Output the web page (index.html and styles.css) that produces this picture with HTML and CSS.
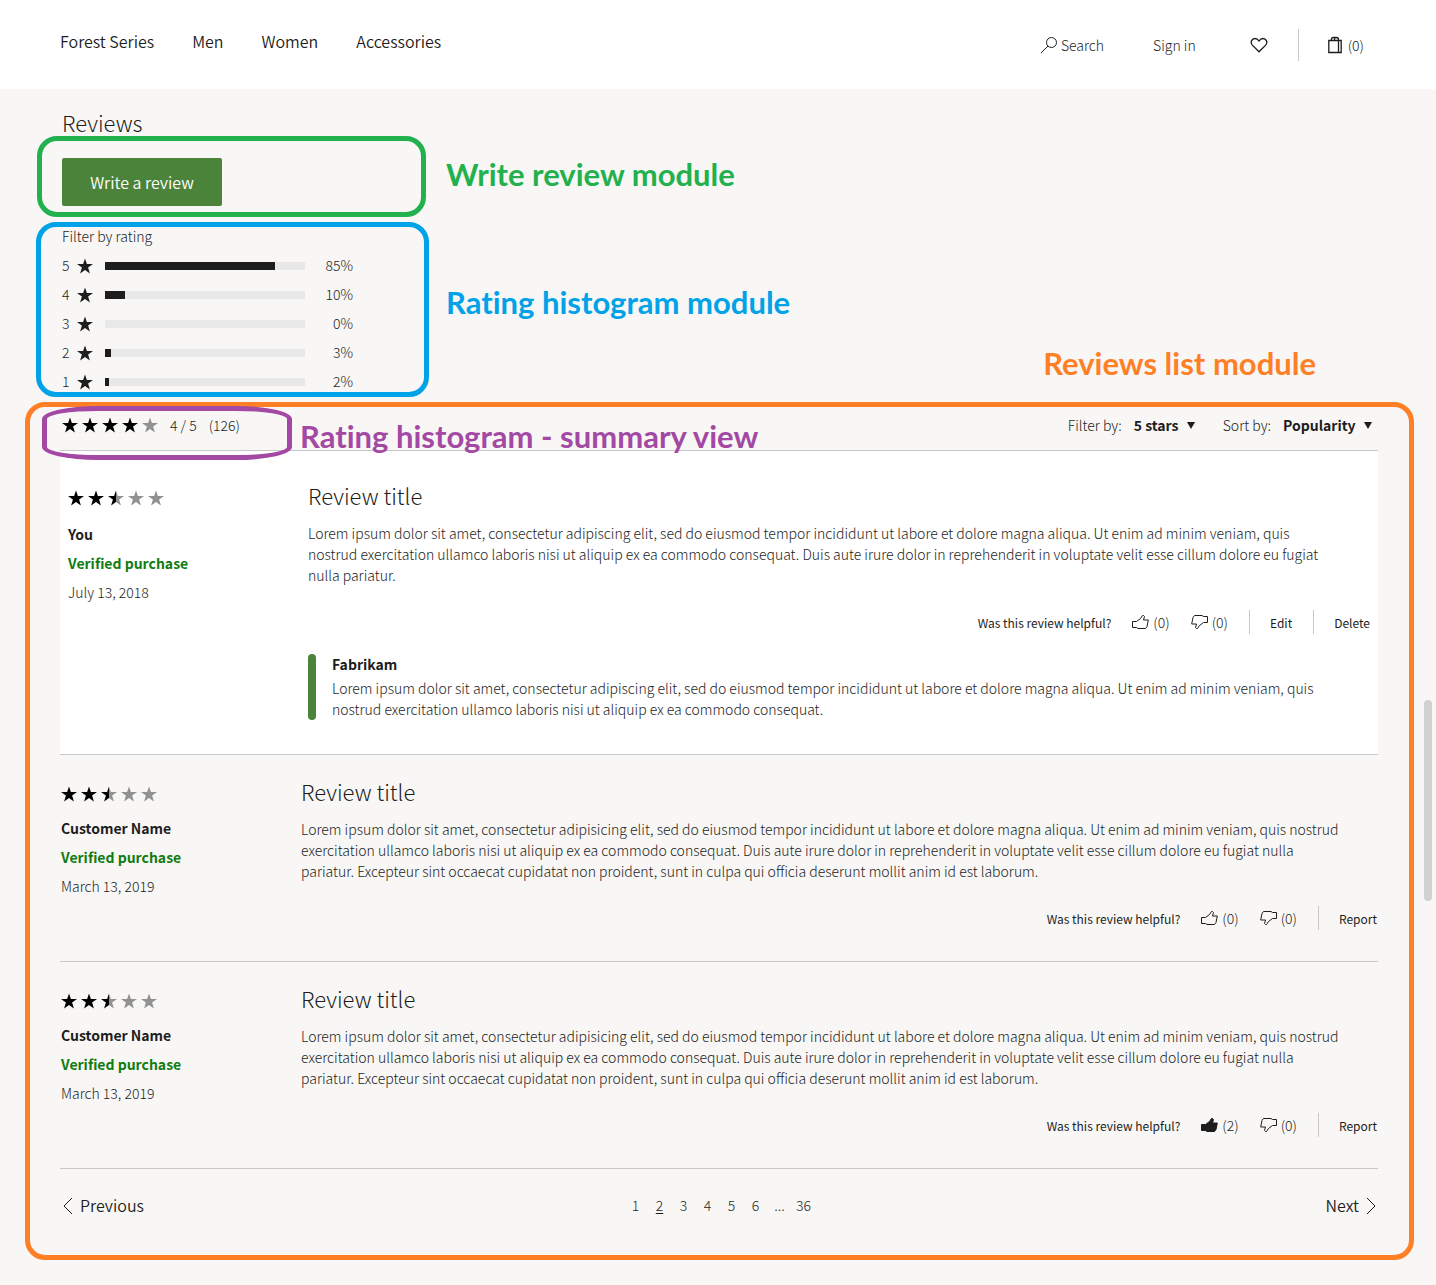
FILE: index.html
```html
<!DOCTYPE html>
<html lang="en">
<head>
<meta charset="utf-8">
<meta name="viewport" content="width=device-width, initial-scale=1">
<title>Reviews</title>
<link rel="stylesheet" href="styles.css">
</head>
<body>
<svg class="sprite" aria-hidden="true">
  <defs>
    <symbol id="star" viewBox="0 0 16 16"><path d="M8 0.5 9.9 6H16L11.1 9.6 12.9 15.5 8 12 3.1 15.5 4.9 9.6 0 6H6.1Z"/></symbol>
    <symbol id="half" viewBox="0 0 16 16"><path d="M8 0.5 9.9 6H16L11.1 9.6 12.9 15.5 8 12Z" fill="#919191"/><path d="M8 0.5V12L3.1 15.5 4.9 9.6 0 6H6.1Z"/></symbol>
    <symbol id="thumb" viewBox="0 0 17 16"><path d="M.5 7.5H4.500L8.500 4.500 10.500 1.500H11.500L12.500 2.500 11.500 6H16.300L15 12.500 13.500 14.500H6L4.500 13.500H.5Z"/></symbol>
  </defs>
</svg>

<header class="header">
  <nav class="nav">
    <a href="#">Forest Series</a>
    <a href="#">Men</a>
    <a href="#">Women</a>
    <a href="#">Accessories</a>
  </nav>
  <div class="tools">
    <button class="tool" type="button">
      <svg class="icon" width="18" height="18" viewBox="0 0 18 18"><circle cx="11.5" cy="6.5" r="5"/><path d="M8 10 1 17"/></svg>
      Search
    </button>
    <a class="tool tool-signin" href="#">Sign in</a>
    <a class="tool tool-heart" href="#" aria-label="Wishlist">
      <svg class="icon bold" width="18" height="16" viewBox="0 0 18 16"><path d="M9 14.800 2.300 8.100C-.2 5 2 1.500 5 1.500 7 1.500 8 2.500 9 4 10 2.500 11 1.500 13 1.500 16 1.500 18.200 5 15.700 8.100Z"/></svg>
    </a>
    <a class="tool tool-bag" href="#" aria-label="Bag, 0 items">
      <svg class="icon bold" width="14" height="18" viewBox="0 0 14 18"><path d="M.8 4.500H13.200V16.500H.8ZM10.500 4.500V16.500M3.500 4.500V3Q3.500 1.500 5 1.500H8.500Q10.500 1.500 10.500 4M6.500 4.500V3Q6.500 1.500 8 1.500"/></svg>
      (0)
    </a>
  </div>
</header>

<main class="main">
  <h1 class="heading">Reviews</h1>

  <section class="module write">
    <button class="write-button" type="button">Write a review</button>
    <div class="outline outline-write"></div>
    <p class="label label-write">Write review module</p>
  </section>

  <section class="module histogram">
    <h2 class="histogram-title">Filter by rating</h2>
    <button class="bar-row" type="button"><span class="bar-num">5</span><svg class="star-dark" width="16" height="16"><use href="#star"/></svg><span class="bar"><span class="bar-fill" style="width:85%"></span></span><span class="bar-pct">85%</span></button>
    <button class="bar-row" type="button"><span class="bar-num">4</span><svg class="star-dark" width="16" height="16"><use href="#star"/></svg><span class="bar"><span class="bar-fill" style="width:10%"></span></span><span class="bar-pct">10%</span></button>
    <button class="bar-row" type="button"><span class="bar-num">3</span><svg class="star-dark" width="16" height="16"><use href="#star"/></svg><span class="bar"><span class="bar-fill" style="width:0%"></span></span><span class="bar-pct">0%</span></button>
    <button class="bar-row" type="button"><span class="bar-num">2</span><svg class="star-dark" width="16" height="16"><use href="#star"/></svg><span class="bar"><span class="bar-fill" style="width:3%"></span></span><span class="bar-pct">3%</span></button>
    <button class="bar-row" type="button"><span class="bar-num">1</span><svg class="star-dark" width="16" height="16"><use href="#star"/></svg><span class="bar"><span class="bar-fill" style="width:2%"></span></span><span class="bar-pct">2%</span></button>
    <div class="outline outline-histogram"></div>
    <p class="label label-histogram">Rating histogram module</p>
  </section>

  <section class="module list">
    <div class="toolbar">
      <div class="summary">
        <span class="stars" role="img" aria-label="4 of 5 stars">
          <svg width="16" height="16"><use href="#star"/></svg><svg width="16" height="16"><use href="#star"/></svg><svg width="16" height="16"><use href="#star"/></svg><svg width="16" height="16"><use href="#star"/></svg><svg class="off" width="16" height="16"><use href="#star"/></svg>
        </span>
        <span>4 / 5</span>
        <span>(126)</span>
      </div>
      <div class="filters">
        <div class="field">
          <label for="filter">Filter by:</label>
          <span class="picker"><select id="filter"><option>5 stars</option></select></span>
        </div>
        <div class="field">
          <label for="sort">Sort by:</label>
          <span class="picker"><select id="sort"><option>Popularity</option></select></span>
        </div>
      </div>
    </div>

    <article class="review review-own">
      <div class="author">
        <span class="stars" role="img" aria-label="2.5 of 5 stars">
          <svg width="16" height="16"><use href="#star"/></svg><svg width="16" height="16"><use href="#star"/></svg><svg width="16" height="16"><use href="#half"/></svg><svg class="off" width="16" height="16"><use href="#star"/></svg><svg class="off" width="16" height="16"><use href="#star"/></svg>
        </span>
        <p class="name">You</p>
        <p class="verified">Verified purchase</p>
        <p>July 13, 2018</p>
      </div>
      <div class="body">
        <h3 class="title">Review title</h3>
        <p class="text">Lorem ipsum dolor sit amet, consectetur adipiscing elit, sed do eiusmod tempor incididunt ut labore et dolore magna aliqua. Ut enim ad minim veniam, quis nostrud exercitation ullamco laboris nisi ut aliquip ex ea commodo consequat. Duis aute irure dolor in reprehenderit in voluptate velit esse cillum dolore eu fugiat nulla pariatur.</p>
        <div class="actions">
          <span>Was this review helpful?</span>
          <button class="vote" type="button" aria-label="Helpful"><svg class="icon" width="17" height="16"><use href="#thumb"/></svg>(0)</button>
          <button class="vote" type="button" aria-label="Not helpful"><svg class="icon down" width="17" height="16"><use href="#thumb"/></svg>(0)</button>
          <button class="action" type="button">Edit</button>
          <button class="action" type="button">Delete</button>
        </div>
        <div class="reply">
          <p class="reply-name">Fabrikam</p>
          <p class="reply-text">Lorem ipsum dolor sit amet, consectetur adipiscing elit, sed do eiusmod tempor incididunt ut labore et dolore magna aliqua. Ut enim ad minim veniam, quis nostrud exercitation ullamco laboris nisi ut aliquip ex ea commodo consequat.</p>
        </div>
      </div>
    </article>

    <article class="review">
      <div class="author">
        <span class="stars" role="img" aria-label="2.5 of 5 stars">
          <svg width="16" height="16"><use href="#star"/></svg><svg width="16" height="16"><use href="#star"/></svg><svg width="16" height="16"><use href="#half"/></svg><svg class="off" width="16" height="16"><use href="#star"/></svg><svg class="off" width="16" height="16"><use href="#star"/></svg>
        </span>
        <p class="name">Customer Name</p>
        <p class="verified">Verified purchase</p>
        <p>March 13, 2019</p>
      </div>
      <div class="body">
        <h3 class="title">Review title</h3>
        <p class="text">Lorem ipsum dolor sit amet, consectetur adipisicing elit, sed do eiusmod tempor incididunt ut labore et dolore magna aliqua. Ut enim ad minim veniam, quis nostrud exercitation ullamco laboris nisi ut aliquip ex ea commodo consequat. Duis aute irure dolor in reprehenderit in voluptate velit esse cillum dolore eu fugiat nulla pariatur. Excepteur sint occaecat cupidatat non proident, sunt in culpa qui officia deserunt mollit anim id est laborum.</p>
        <div class="actions">
          <span>Was this review helpful?</span>
          <button class="vote" type="button" aria-label="Helpful"><svg class="icon" width="17" height="16"><use href="#thumb"/></svg>(0)</button>
          <button class="vote" type="button" aria-label="Not helpful"><svg class="icon down" width="17" height="16"><use href="#thumb"/></svg>(0)</button>
          <button class="action" type="button">Report</button>
        </div>
      </div>
    </article>

    <article class="review">
      <div class="author">
        <span class="stars" role="img" aria-label="2.5 of 5 stars">
          <svg width="16" height="16"><use href="#star"/></svg><svg width="16" height="16"><use href="#star"/></svg><svg width="16" height="16"><use href="#half"/></svg><svg class="off" width="16" height="16"><use href="#star"/></svg><svg class="off" width="16" height="16"><use href="#star"/></svg>
        </span>
        <p class="name">Customer Name</p>
        <p class="verified">Verified purchase</p>
        <p>March 13, 2019</p>
      </div>
      <div class="body">
        <h3 class="title">Review title</h3>
        <p class="text">Lorem ipsum dolor sit amet, consectetur adipisicing elit, sed do eiusmod tempor incididunt ut labore et dolore magna aliqua. Ut enim ad minim veniam, quis nostrud exercitation ullamco laboris nisi ut aliquip ex ea commodo consequat. Duis aute irure dolor in reprehenderit in voluptate velit esse cillum dolore eu fugiat nulla pariatur. Excepteur sint occaecat cupidatat non proident, sunt in culpa qui officia deserunt mollit anim id est laborum.</p>
        <div class="actions">
          <span>Was this review helpful?</span>
          <button class="vote" type="button" aria-label="Helpful"><svg class="icon solid" width="17" height="16"><use href="#thumb"/></svg>(2)</button>
          <button class="vote" type="button" aria-label="Not helpful"><svg class="icon down" width="17" height="16"><use href="#thumb"/></svg>(0)</button>
          <button class="action" type="button">Report</button>
        </div>
      </div>
    </article>

    <nav class="pager" aria-label="Review pages">
      <a class="step" href="#"><svg class="icon" width="10" height="18" viewBox="0 0 10 18"><path d="M9 1 1 9 9 17"/></svg>Previous</a>
      <div class="pages">
        <a href="#">1</a><a class="current" href="#" aria-current="page">2</a><a href="#">3</a><a href="#">4</a><a href="#">5</a><a href="#">6</a><span>...</span><a href="#">36</a>
      </div>
      <a class="step step-next" href="#">Next<svg class="icon" width="10" height="18" viewBox="0 0 10 18"><path d="M1 1 9 9 1 17"/></svg></a>
    </nav>

    <div class="outline outline-list"></div>
    <p class="label label-list">Reviews list module</p>
    <div class="outline outline-summary"></div>
    <p class="label label-summary">Rating histogram - summary view</p>
  </section>
</main>
<div class="thumb-bar"></div>
</body>
</html>
```
FILE: styles.css
```css
* { box-sizing: border-box; }
body {
  position: relative;
  min-height: 100vh;
  margin: 0;
  background: #f8f7f5;
  color: #1d1d1d;
  font: 300 14px/21px "Noto Sans CJK SC", "Open Sans", sans-serif;
}
h1, h2, h3, p { margin: 0; font-weight: inherit; }
a { color: inherit; text-decoration: none; }
button {
  padding: 0;
  border: 0;
  background: none;
  color: inherit;
  font: inherit;
  cursor: pointer;
}
.sprite { position: absolute; width: 0; height: 0; }
.icon { flex: none; fill: none; stroke: #1d1d1d; stroke-width: 1; }
.bold { stroke-width: 1.3; }

.header {
  display: flex;
  justify-content: space-between;
  min-height: 89px;
  padding: 28px 72px 28px 60px;
  background: #fff;
}
.nav {
  display: flex;
  gap: 38px;
  font-size: 16px;
  font-weight: 350;
  line-height: 26px;
}
.tools { display: flex; height: 32px; margin-top: 1px; }
.tool { display: flex; align-items: center; gap: 3px; }
.tool-signin { margin-left: 49px; }
.tool-heart { margin-left: 54px; padding-right: 30px; border-right: 1px solid #c8c8c8; }
.tool-bag { margin-left: 29px; gap: 6px; }

.main { padding: 18px 58px 25px 60px; }
.heading { padding-left: 2px; font-size: 22px; line-height: 30px; }
.module { position: relative; }

.write { padding: 21px 2px 16px; }
.write-button {
  display: block;
  width: 160px;
  height: 48px;
  border-radius: 2px;
  background: #4c833a;
  color: #fff;
  font-size: 16px;
  font-weight: 350;
}

.histogram { padding: 0 2px 10px; }
.histogram-title { font-size: 14px; line-height: 29px; }
.bar-row { display: flex; align-items: center; height: 29px; }
.bar-num { width: 15px; text-align: left; }
.star-dark { fill: #1d1d1d; }
.bar { width: 200px; height: 8px; margin-left: 12px; background: #e8e8e8; }
.bar-fill { display: block; height: 8px; background: #1d1d1d; }
.bar-pct { width: 48px; text-align: right; }

.toolbar {
  display: flex;
  justify-content: space-between;
  align-items: center;
  height: 45px;
  padding: 0 6px 6px 2px;
  border-bottom: 1px solid #c8c8c8;
}
.summary { display: flex; align-items: center; gap: 12px; }
.stars { display: flex; gap: 4px; align-items: center; fill: #000; }
.off { fill: #919191; }
.filters { display: flex; gap: 28px; }
.field { display: flex; align-items: center; gap: 12px; }
.picker { display: flex; align-items: center; gap: 8px; }
.picker::after {
  content: "";
  border: solid transparent;
  border-width: 7px 4px 0;
  border-top-color: #1d1d1d;
}
select {
  appearance: none;
  padding: 0;
  border: 0;
  background: none;
  color: inherit;
  font: inherit;
  font-weight: 700;
}

.review {
  display: flex;
  padding: 21px 1px 31px;
  border-bottom: 1px solid #c8c8c8;
}
.review-own { padding: 29px 8px 34px; background: #fff; }
.author { flex: none; width: 240px; line-height: 29px; }
.author .stars { height: 36px; margin-bottom: 2px; }
.review-own .stars { margin-bottom: 4px; }
.name { font-weight: 700; }
.verified { color: #107c10; font-weight: 700; }
.body { flex: 1; }
.title { font-size: 22px; line-height: 30px; }
.text { margin-top: 13px; }
.text, .reply-text { padding-right: 32px; }
.actions {
  display: flex;
  justify-content: flex-end;
  align-items: center;
  gap: 21px;
  height: 24px;
  margin-top: 24px;
  font-size: 12px;
  font-weight: 400;
}
.vote { display: flex; align-items: center; gap: 4px; font-size: 14px; font-weight: 300; }
.down { transform: rotate(180deg); }
.solid { fill: #1d1d1d; }
.action { height: 24px; padding-left: 20px; border-left: 1px solid #c8c8c8; }
.reply { position: relative; margin-top: 20px; padding-left: 24px; }
.reply::before {
  content: "";
  position: absolute;
  inset: 0 auto 0 0;
  width: 8px;
  border-radius: 4px;
  background: #4c833a;
}
.reply-name { font-weight: 700; }
.reply-text { margin-top: 3px; }

.pager {
  display: grid;
  grid-template-columns: 1fr auto 1fr;
  align-items: center;
  height: 73px;
  padding: 0 2px 0 3px;
}
.step { display: flex; align-items: center; gap: 7px; font-size: 16px; font-weight: 350; }
.step-next { justify-content: flex-end; }
.pages { display: grid; grid-template-columns: repeat(8, 24px); text-align: center; }
.current { text-decoration: underline; text-underline-offset: 2px; }

.outline { position: absolute; border: 5px solid; border-radius: 20px; pointer-events: none; }
.outline-write { top: -1px; bottom: 5px; left: -23px; width: 389px; color: #22b14c; }
.outline-histogram { top: 0; bottom: 9px; left: -24px; width: 393px; color: #00a2e8; }
.outline-list { inset: -4px -36px -18px -35px; color: #ff7f27; }
.outline-summary {
  top: 0;
  left: -18px;
  width: 250px;
  height: 54px;
  border-radius: 56px / 13px;
  color: #a349a4;
}
.label {
  position: absolute;
  font: 700 31px/36px Lato, "Open Sans", sans-serif;
  font-variant-ligatures: none;
  white-space: nowrap;
}
.label-write { top: 19px; left: 386px; color: #22b14c; }
.label-histogram { top: 62px; left: 386px; color: #00a2e8; }
.label-list { top: -61px; right: 62px; color: #ff7f27; }
.label-summary { top: 12px; left: 240px; color: #a349a4; }
.thumb-bar {
  position: absolute;
  top: 700px;
  right: 4px;
  width: 8px;
  height: 201px;
  border-radius: 4px;
  background: #d1d1d1;
}
```
